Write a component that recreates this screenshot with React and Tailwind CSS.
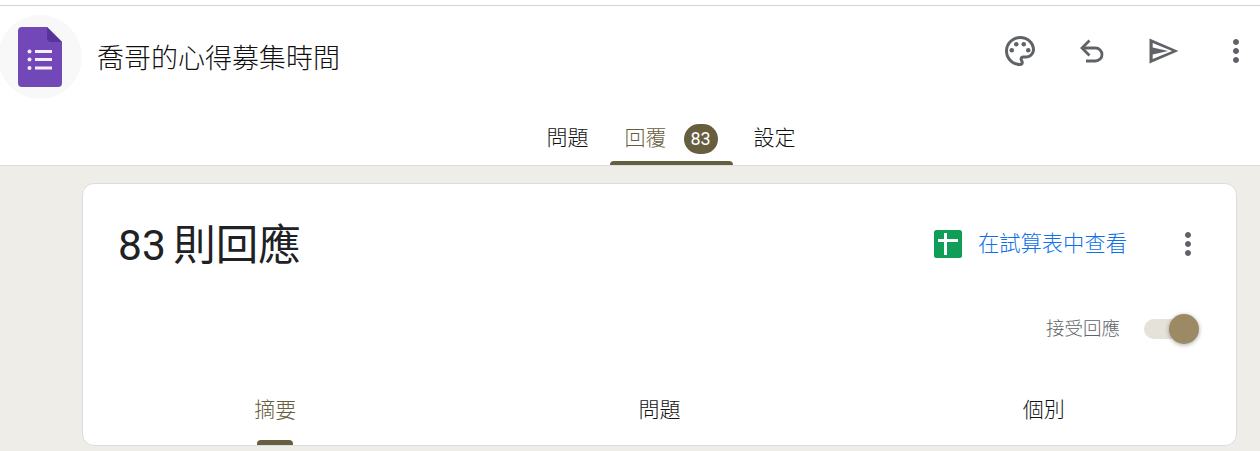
import React from 'react';
import { MdOutlinePalette, MdMoreVert } from 'react-icons/md';

const FONT = 'font-["Roboto","Noto_Sans_CJK_TC",sans-serif]';

function FormsLogo() {
  return (
    <svg width="44" height="60" viewBox="0 0 44 60">
      <path d="M4 0H29L44 15V56a4 4 0 0 1-4 4H4a4 4 0 0 1-4-4V4a4 4 0 0 1 4-4Z" fill="#7248b9" />
      <path d="M29 0L44 15H33a4 4 0 0 1-4-4Z" fill="#56349a" />
      <g fill="#f3eefa">
        <circle cx="11.5" cy="24.5" r="2" />
        <circle cx="11.5" cy="32.5" r="2" />
        <circle cx="11.5" cy="41" r="2" />
        <rect x="17" y="23" width="17" height="3" />
        <rect x="17" y="31" width="17" height="3" />
        <rect x="17" y="39.5" width="17" height="3" />
      </g>
    </svg>
  );
}

function SheetsIcon() {
  return (
    <svg width="28" height="28" viewBox="0 0 28 28">
      <rect width="28" height="28" rx="2.5" fill="#0f9d58" />
      <path d="M4 9H10V3H13V9H24V12H13V25H10V12H4Z" fill="#fff" />
    </svg>
  );
}

function UndoIcon() {
  return (
    <svg width="36" height="36" viewBox="0 0 36 36" fill="none" stroke="currentColor" strokeWidth="2.8">
      <path d="M15.5 7.5L8 15L15.5 22.5" />
      <path d="M8 15H21.5a6.5 6.5 0 0 1 0 13H12" />
    </svg>
  );
}

function SendIcon() {
  return (
    <svg width="36" height="36" viewBox="0 0 24 24" fill="currentColor">
      <g transform="translate(12 12) scale(0.92) translate(-12.5 -12)">
        <path
          fillRule="evenodd"
          d="M2 3L23 12 2 21ZM4.3 6.2L18.4 12 4.3 17.8ZM4.3 9.4L15.5 12 4.3 14.6Z"
        />
      </g>
    </svg>
  );
}

function TopTab({ children }) {
  return (
    <div className="flex h-full items-center px-[15px] pt-[8px] font-light">
      <span className="text-[#111]">{children}</span>
    </div>
  );
}

function CardTab({ active, children }) {
  return (
    <div className="relative flex flex-1 items-center justify-center pt-[6px] font-light">
      <span className={active ? 'text-[#675e3f]' : 'text-[#111]'}>{children}</span>
      {active && <div className="absolute bottom-0 left-1/2 h-[5px] w-9 -translate-x-1/2 rounded-t bg-[#675e3f]" />}
    </div>
  );
}

export default function App() {
  return (
    <div className={`h-[451px] w-[1260px] overflow-hidden bg-[#eeede8] ${FONT}`}>
      <header className="border-b border-[#dadce0] bg-white pt-[5px]">
        <div className="border-t border-[#d4d4d4]">
          <div className="flex h-[98px] items-start pt-[9px]">
            <div className="ml-[-2px] flex h-[84px] w-[84px] shrink-0 items-center justify-center rounded-full bg-[#f8f8f8]">
              <FormsLogo />
            </div>
            <h1 className="ml-[15px] mt-[25px] text-[27px] leading-[38px] font-light text-[#111]">喬哥的心得募集時間</h1>
            <div className="ml-auto mr-[6px] mt-[18px] flex items-center gap-[36px] text-[#5f6368]">
              <MdOutlinePalette size={36} />
              <UndoIcon />
              <SendIcon />
              <MdMoreVert size={36} />
            </div>
          </div>
          <nav className="flex h-[61px] justify-center pl-[82px] text-[21px]">
            <div className="flex items-center gap-[6px]">
              <TopTab>問題</TopTab>
              <div className="relative flex h-full items-center px-[15px] pt-[8px] font-light">
                <span className="text-[#675e3f]">回覆</span>
                <span className="ml-[17px] flex h-[30px] w-[34px] items-center justify-center rounded-full bg-[#675e3f] text-[18px] font-normal text-white">83</span>
                <div className="absolute bottom-0 left-0 right-0 h-1 rounded-t bg-[#675e3f]" />
              </div>
              <TopTab>設定</TopTab>
            </div>
          </nav>
        </div>
      </header>

      <main className="pl-[82px] pr-[23px] pt-[17px]">
        <section className="flex h-[263px] flex-col rounded-[12px] border border-[#dadce0] bg-white">
          <div className="flex items-center pl-[35px] pr-[30px] pt-[28px]">
            <h2 className="mt-[4px] text-[42.5px] leading-[60px] font-normal text-[#202124] [word-spacing:-3px]">83 則回應</h2>
            <div className="ml-auto flex items-center">
              <SheetsIcon />
              <span className="ml-4 text-[21.3px] font-light text-[#0f6fe8]">在試算表中查看</span>
            </div>
            <MdMoreVert size={36} className="ml-[43px] text-[#5f6368]" />
          </div>
          <div className="mt-[39px] flex items-center justify-end pr-[46px]">
            <span className="translate-y-px text-[18.5px] font-light text-[#5f6368]">接受回應</span>
            <div className="relative ml-[24px] h-5 w-[46px] rounded-full bg-[#e4e2d9]">
              <div className="absolute right-[-9px] top-[-5px] h-[30px] w-[30px] rounded-full bg-[#9c8a64] shadow-[0_1px_4px_rgba(0,0,0,0.35)]" />
            </div>
          </div>
          <div className="mt-auto flex h-[75px] text-[21px]">
            <CardTab active>摘要</CardTab>
            <CardTab>問題</CardTab>
            <CardTab>個別</CardTab>
          </div>
        </section>
      </main>
    </div>
  );
}
